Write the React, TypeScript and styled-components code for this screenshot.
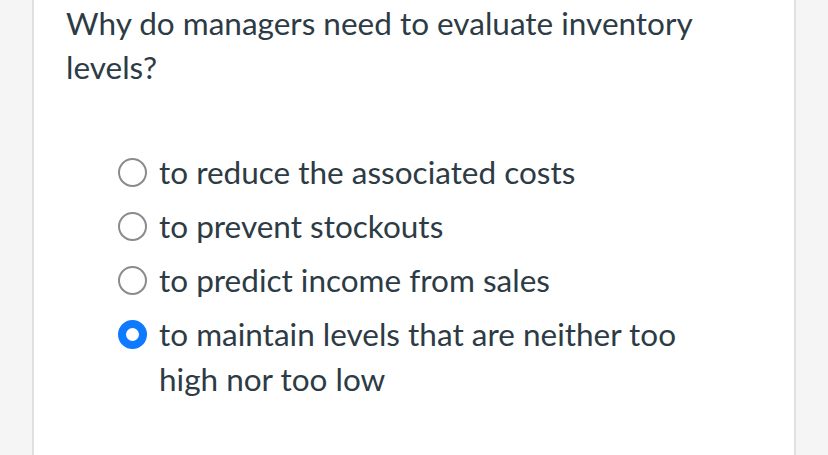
import styled, { createGlobalStyle } from 'styled-components';

const GlobalStyle = createGlobalStyle`
  html, body {
    margin: 0;
    padding: 0;
    background: #f5f5f5;
    height: 100%;
  }
  #root {
    height: 100%;
  }
`

const Page = styled.div`
  height: 455px;
  overflow: hidden;
  padding: 0 32px;
`

const Card = styled.div`
  height: 100%;
  background: #ffffff;
  border-left: 2px solid #e0e0e0;
  border-right: 2px solid #e0e0e0;
  padding: 1px 32px 0 32px;
  font-family: Lato, "Open Sans", sans-serif;
  color: #2d3b45;
`

const Question = styled.p`
  margin: 0;
  font-size: 31.5px;
  line-height: 44px;
`

const Answers = styled.div`
  display: flex;
  flex-direction: column;
  gap: 9px;
  margin-top: 61px;
  padding-left: 52px;
`

const Answer = styled.label`
  display: flex;
  align-items: flex-start;
  gap: 12px;
  font-size: 31.5px;
  line-height: 45px;
`

const AnswerText = styled.span`
  max-width: 560px;
`

const Radio = styled.span<{ checked?: boolean }>`
  flex: none;
  box-sizing: border-box;
  width: 29px;
  height: 29px;
  margin-top: 8px;
  border-radius: 50%;
  border: ${props => props.checked ? '8px solid #0d7aff' : '2.5px solid #8b8b8b'};
  background: #ffffff;
`

const answers = [
  { id: 1, text: 'to reduce the associated costs', checked: false },
  { id: 2, text: 'to prevent stockouts', checked: false },
  { id: 3, text: 'to predict income from sales', checked: false },
  { id: 4, text: 'to maintain levels that are neither too high nor too low', checked: true },
]

const App = () => {
  return (
    <Page>
      <GlobalStyle />
      <Card>
        <Question>Why do managers need to evaluate inventory levels?</Question>
        <Answers>
          {answers.map(a => (
            <Answer key={a.id}>
              <Radio checked={a.checked} />
              <AnswerText>{a.text}</AnswerText>
            </Answer>
          ))}
        </Answers>
      </Card>
    </Page>
  );
}

export default App;
